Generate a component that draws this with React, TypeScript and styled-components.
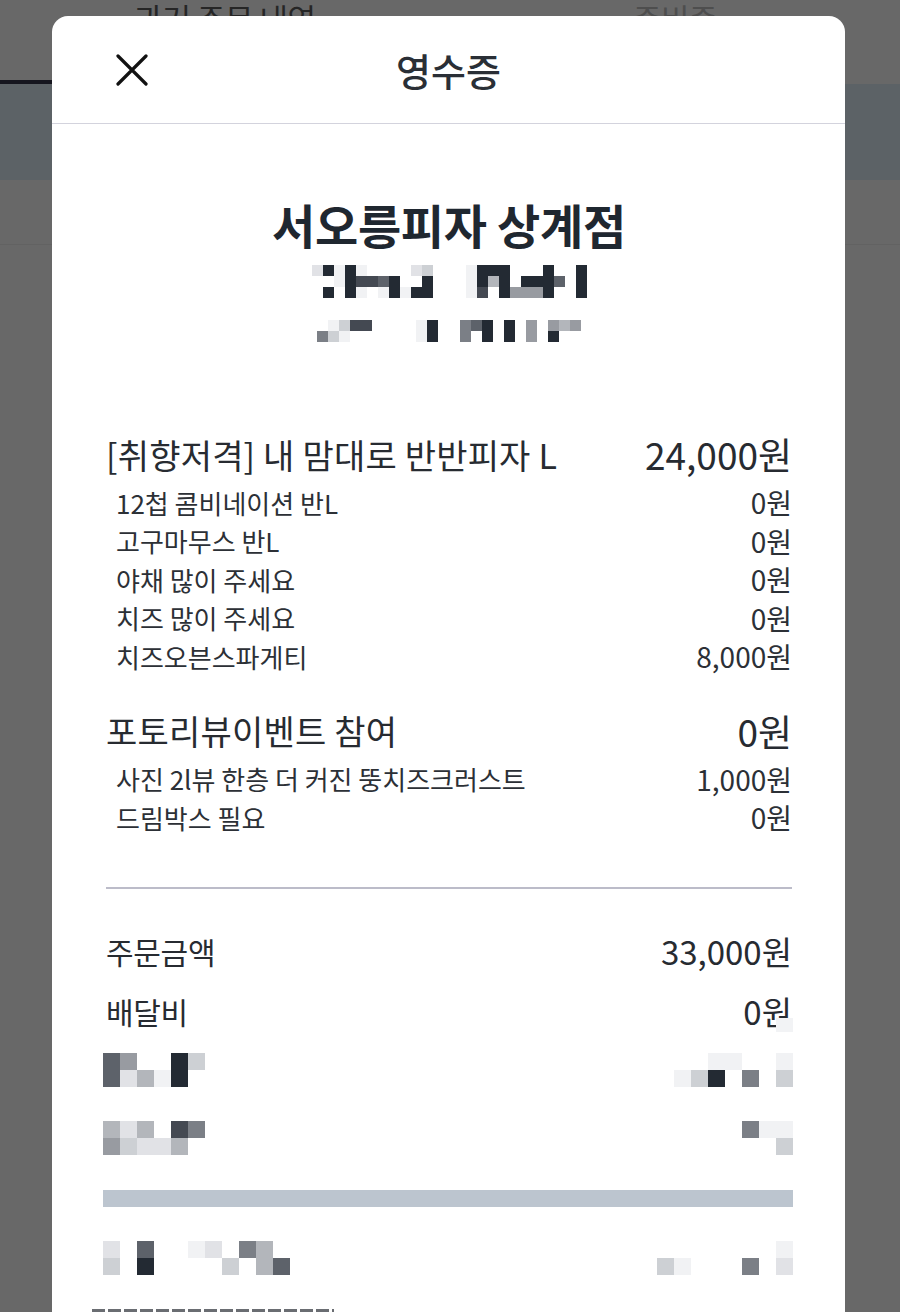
import styled, { createGlobalStyle } from 'styled-components'

const GlobalStyle = createGlobalStyle`
  html, body {
    margin: 0;
    padding: 0;
    background: #686868;
  }
  body {
    font-family: "Noto Sans CJK KR", "Noto Sans", sans-serif;
  }
`

const shades: Record<string, string> = {
  '1': '#f1f2f4',
  '2': '#e1e2e6',
  '3': '#cdd0d4',
  '4': '#b3b6bb',
  '5': '#989ba1',
  '6': '#7b7f86',
  '7': '#5d626a',
  '8': '#444952',
  '9': '#232a33',
}

interface SubItem {
  name: string
  price: string
}

interface Item {
  name: string
  price: string
  options: SubItem[]
}

const items: Item[] = [
  {
    name: '[취향저격] 내 맘대로 반반피자 L',
    price: '24,000원',
    options: [
      { name: '12첩 콤비네이션 반L', price: '0원' },
      { name: '고구마무스 반L', price: '0원' },
      { name: '야채 많이 주세요', price: '0원' },
      { name: '치즈 많이 주세요', price: '0원' },
      { name: '치즈오븐스파게티', price: '8,000원' },
    ],
  },
  {
    name: '포토리뷰이벤트 참여',
    price: '0원',
    options: [
      { name: '사진 2l뷰 한층 더 커진 뚱치즈크러스트', price: '1,000원' },
      { name: '드림박스 필요', price: '0원' },
    ],
  },
]

function Mosaic({ rows, cell }: { rows: string[]; cell: number }) {
  const cols = rows[0].length
  return (
    <MosaicGrid $cols={cols} $cell={cell}>
      {rows.flatMap((row, r) =>
        row.split('').map((ch, c) => <MosaicCell key={`${r}-${c}`} $color={shades[ch]} />)
      )}
    </MosaicGrid>
  )
}

function CloseIcon() {
  return (
    <svg width="32" height="32" viewBox="0 0 32 32" fill="none">
      <path d="M2 2 L30 30 M30 2 L2 30" stroke="#111" strokeWidth="3.2" strokeLinecap="round" />
    </svg>
  )
}

export default function App() {
  return (
    <Page>
      <GlobalStyle />
      <TabBar>
        <Tab $active>과거 주문 내역</Tab>
        <Tab>준비중</Tab>
      </TabBar>
      <Banner />
      <Section />

      <Modal>
        <ModalHeader>
          <CloseButton aria-label="닫기">
            <CloseIcon />
          </CloseButton>
          <Title>영수증</Title>
          <span />
        </ModalHeader>

        <Receipt>
          <StoreName>서오릉피자 상계점</StoreName>
          <Centered $top={14}>
            <Mosaic
              cell={11}
              rows={[
                '29191....23...1999...9..9',
                '..198879..9...1949.9997.9',
                '.9.91.19199...18.95559..9',
              ]}
            />
          </Centered>
          <Centered $top={22}>
            <Mosaic
              cell={11}
              rows={['.1388....19..679.9.5.545', '631......19..6.9.9.5.9..']}
            />
          </Centered>

          {items.map((item, i) => (
            <Group key={item.name} $top={i === 0 ? 90 : 33}>
              <MainRow>
                <span>{item.name}</span>
                <MainPrice>{item.price}</MainPrice>
              </MainRow>
              <OptionList>
                {item.options.map((opt) => (
                  <OptionRow key={opt.name}>
                    <span>{opt.name}</span>
                    <OptionPrice>{opt.price}</OptionPrice>
                  </OptionRow>
                ))}
              </OptionList>
            </Group>
          ))}

          <Divider />

          <TotalRow $top={32}>
            <span>주문금액</span>
            <TotalPrice>33,000원</TotalPrice>
          </TotalRow>
          <TotalRow>
            <span>배달비</span>
            <TotalPrice $masked>0원</TotalPrice>
          </TotalRow>

          <MosaicRow $top={12}>
            <Mosaic cell={17} rows={['75..93', '72419.']} />
            <Mosaic cell={17} rows={['..11..1', '139.6.3']} />
          </MosaicRow>
          <MosaicRow $top={34}>
            <Mosaic cell={17} rows={['424.86', '53224.']} />
            <Mosaic cell={17} rows={['....611', '......3']} />
          </MosaicRow>

          <Bar />

          <MosaicRow $top={34}>
            <Mosaic cell={17} rows={['2.7..12.64.', '3.9....3.47']} />
            <Mosaic cell={17} rows={['.......1', '31...6.2']} />
          </MosaicRow>

          <Dashes />
        </Receipt>
      </Modal>
    </Page>
  )
}

const Page = styled.div`
  position: relative;
  width: 900px;
  height: 1312px;
  overflow: hidden;
  background: #686868;
`

const TabBar = styled.div`
  display: grid;
  grid-template-columns: 1fr 1fr;
  height: 84px;
`

const Tab = styled.div<{ $active?: boolean }>`
  display: flex;
  justify-content: center;
  align-items: flex-start;
  box-sizing: border-box;
  font-size: 31px;
  line-height: 36px;
  letter-spacing: -0.5px;
  color: ${(p) => (p.$active ? '#262626' : '#4e4e4e')};
  border-bottom: 4px solid ${(p) => (p.$active ? '#16161f' : 'transparent')};
`

const Banner = styled.div`
  height: 96px;
  background: #5c6266;
`

const Section = styled.div`
  height: 64px;
  border-bottom: 1px solid #626262;
`

const Modal = styled.div`
  position: absolute;
  top: 16px;
  left: 52px;
  width: 793px;
  bottom: -40px;
  background: #ffffff;
  border-radius: 16px 16px 0 0;
  overflow: hidden;
  display: flex;
  flex-direction: column;
`

const ModalHeader = styled.header`
  display: grid;
  grid-template-columns: 1fr auto 1fr;
  align-items: center;
  height: 107px;
  flex-shrink: 0;
  padding-left: 64px;
  padding-right: 64px;
  border-bottom: 1.5px solid #d3d3dd;
`

const CloseButton = styled.button`
  justify-self: start;
  display: flex;
  padding: 0;
  border: 0;
  background: transparent;
`

const Title = styled.h2`
  margin: 0;
  font-size: 38px;
  font-weight: 500;
  line-height: 44px;
  letter-spacing: 0;
  color: #2a2f36;
`

const Receipt = styled.div`
  display: flex;
  flex-direction: column;
  padding: 0 53px 0 54px;
`

const StoreName = styled.h1`
  margin: 73px 0 0;
  text-align: center;
  font-size: 47px;
  font-weight: 700;
  line-height: 54px;
  letter-spacing: -0.3px;
  color: #1f2730;
`

const Centered = styled.div<{ $top: number }>`
  display: flex;
  justify-content: center;
  margin-top: ${(p) => p.$top}px;
`

const MosaicGrid = styled.div<{ $cols: number; $cell: number }>`
  display: grid;
  grid-template-columns: repeat(${(p) => p.$cols}, ${(p) => p.$cell}px);
  grid-auto-rows: ${(p) => p.$cell}px;
`

const MosaicCell = styled.span<{ $color?: string }>`
  background: ${(p) => p.$color ?? 'transparent'};
`

const Group = styled.section<{ $top: number }>`
  margin-top: ${(p) => p.$top}px;
`

const MainRow = styled.div`
  display: flex;
  justify-content: space-between;
  align-items: center;
  height: 44px;
  font-size: 34px;
  letter-spacing: 0.2px;
  color: #272b31;
`

const MainPrice = styled.span`
  font-size: 37px;
  letter-spacing: 0;
`

const OptionList = styled.ul`
  list-style: none;
  margin: 7px 0 0;
  padding: 0 0 0 10px;
`

const OptionRow = styled.li`
  display: flex;
  justify-content: space-between;
  align-items: center;
  height: 38.5px;
  font-size: 26px;
  letter-spacing: 0;
  color: #2c3036;
`

const OptionPrice = styled.span`
  font-size: 28px;
`

const Divider = styled.hr`
  margin: 50px 0 0;
  border: 0;
  height: 2px;
  background: #bcbcc9;
`

const TotalRow = styled.div<{ $top?: number }>`
  display: flex;
  justify-content: space-between;
  align-items: center;
  height: 60px;
  margin-top: ${(p) => p.$top ?? 0}px;
  font-size: 30px;
  letter-spacing: -0.3px;
  color: #272b31;
`

const TotalPrice = styled.span<{ $masked?: boolean }>`
  position: relative;
  font-size: 33px;
  letter-spacing: 0;

  &::after {
    content: '';
    display: ${(p) => (p.$masked ? 'block' : 'none')};
    position: absolute;
    right: -1px;
    bottom: 3px;
    width: 17px;
    height: 14px;
    background: #f2f3f5;
  }
`

const MosaicRow = styled.div<{ $top: number }>`
  display: flex;
  justify-content: space-between;
  align-items: flex-start;
  margin: ${(p) => p.$top}px -1px 0 -3px;
`

const Bar = styled.div`
  margin: 35px -1px 0 -3px;
  height: 17px;
  background: #bcc5cf;
`

const Dashes = styled.div`
  margin: 34px 0 0 -14px;
  width: 242px;
  height: 3px;
  background: repeating-linear-gradient(90deg, #6a6d72 0 13px, transparent 13px 16px);
`
